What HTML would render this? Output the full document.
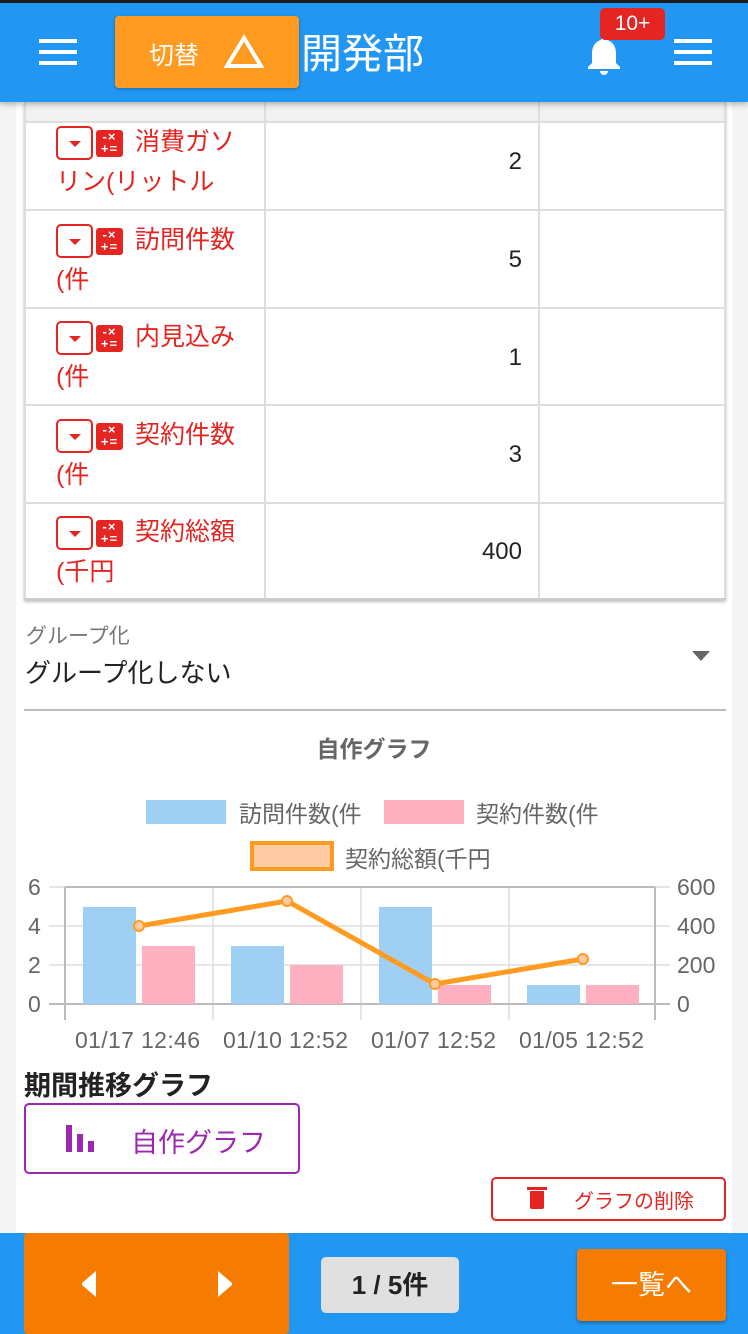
<!DOCTYPE html>
<html><head><meta charset="utf-8"><style>
*{margin:0;padding:0;box-sizing:border-box}
body{width:748px;height:1334px;position:relative;overflow:hidden;background:#f4f4f4;font-family:"Liberation Sans","Noto Sans CJK JP",sans-serif}
.a{position:absolute}
.card{left:16px;top:100px;width:716px;height:1140px;background:#fff}
.hdr{left:0;top:0;width:748px;height:102px;background:#2196f3;border-top:3px solid #1a1a1a;box-shadow:0 2px 6px rgba(0,0,0,.3)}
.hb{background:#fff;height:4px;width:38px}
.rowl{left:24px;width:702px;height:2px;background:#ddd}
.coll{width:2px;background:#ddd;top:102px;height:498px}
.lab{left:56px;color:#e52521;font-size:25px;line-height:40px;width:205px}
.dd{display:inline-block;width:37px;height:34px;border:2px solid #e52521;border-radius:5px;vertical-align:middle;position:relative;margin-right:3px}
.dd:after{content:"";position:absolute;left:11px;top:13px;border:6px solid transparent;border-top:6px solid #e52521}
.calc{display:inline-block;width:27px;height:27px;background:#e52521;border-radius:3px;vertical-align:middle;margin-right:12px;color:#fff;font-size:13px;line-height:12px;text-align:center;font-weight:bold;padding-top:1px;letter-spacing:1px}
.val{right:226px;font-size:24px;color:#222}
</style></head><body>
<div class="a card"></div>
<div class="a" style="left:24px;top:102px;width:702px;height:20px;background:#f2f2f2"></div>
<div class="a" style="left:24px;top:102px;width:702px;height:498px;border-left:2px solid #ddd;border-right:2px solid #ddd;box-shadow:0 2px 3px rgba(0,0,0,.25)"></div>
<div class="a coll" style="left:264px"></div>
<div class="a coll" style="left:538px"></div>
<div class="a rowl" style="top:121px"></div>
<div class="a rowl" style="top:209px"></div>
<div class="a rowl" style="top:307px"></div>
<div class="a rowl" style="top:404px"></div>
<div class="a rowl" style="top:502px"></div>
<div class="a rowl" style="top:598px;background:#ccc"></div>

<div class="a lab" style="top:122px"><span class="dd"></span><span class="calc">-×<br>+=</span>消費ガソ<br>リン(リットル</div>
<div class="a val" style="top:148px">2</div>
<div class="a lab" style="top:220px"><span class="dd"></span><span class="calc">-×<br>+=</span>訪問件数<br>(件</div>
<div class="a val" style="top:246px">5</div>
<div class="a lab" style="top:317px"><span class="dd"></span><span class="calc">-×<br>+=</span>内見込み<br>(件</div>
<div class="a val" style="top:344px">1</div>
<div class="a lab" style="top:415px"><span class="dd"></span><span class="calc">-×<br>+=</span>契約件数<br>(件</div>
<div class="a val" style="top:441px">3</div>
<div class="a lab" style="top:512px"><span class="dd"></span><span class="calc">-×<br>+=</span>契約総額<br>(千円</div>
<div class="a val" style="top:538px">400</div>

<div class="a" style="left:26px;top:620px;font-size:21px;color:#777">グループ化</div>
<div class="a" style="left:25px;top:653px;font-size:26px;color:#222">グループ化しない</div>
<div class="a" style="left:692px;top:651px;border:9px solid transparent;border-top:10px solid #666"></div>
<div class="a" style="left:24px;top:709px;width:702px;height:2px;background:#bbb"></div>
<div class="a" style="left:0;width:748px;top:730px;text-align:center;font-size:23px;font-weight:bold;color:#666">自作グラフ</div>
<div class="a" style="left:146px;top:800px;width:80px;height:24px;background:#a0cff4"></div>
<div class="a" style="left:239px;top:795px;font-size:23px;color:#666">訪問件数(件</div>
<div class="a" style="left:384px;top:800px;width:80px;height:24px;background:#ffb1c1"></div>
<div class="a" style="left:476px;top:795px;font-size:23px;color:#666">契約件数(件</div>
<div class="a" style="left:250px;top:841px;width:84px;height:30px;background:#ffcba4;border:4px solid #ff9b20"></div>
<div class="a" style="left:345px;top:840px;font-size:23px;color:#666">契約総額(千円</div>

<svg class="a" style="left:0;top:870px" width="748" height="190" font-family="Liberation Sans" font-size="23" fill="#666">
<g stroke="#ddd" stroke-width="1.5">
<line x1="49" y1="17" x2="670" y2="17"/><line x1="49" y1="56" x2="670" y2="56"/><line x1="49" y1="95" x2="670" y2="95"/>
<line x1="213" y1="17" x2="213" y2="150"/><line x1="361" y1="17" x2="361" y2="150"/><line x1="509" y1="17" x2="509" y2="150"/>
</g>
<g stroke="#bbb" stroke-width="2"><line x1="49" y1="134" x2="670" y2="134"/><line x1="65" y1="17" x2="65" y2="150"/><line x1="655" y1="17" x2="655" y2="150"/><line x1="65" y1="17" x2="655" y2="17"/></g>
<g fill="#a0cff4"><rect x="83" y="37" width="53" height="97"/><rect x="231" y="76" width="53" height="58"/><rect x="379" y="37" width="53" height="97"/><rect x="527" y="115" width="53" height="19"/></g>
<g fill="#ffb1c1"><rect x="142" y="76" width="53" height="58"/><rect x="290" y="95" width="53" height="39"/><rect x="438" y="115" width="53" height="19"/><rect x="586" y="115" width="53" height="19"/></g>
<polyline points="139,56 287,31 435,114 583,89" fill="none" stroke="#ff9b20" stroke-width="5"/>
<g fill="#ffcba4" stroke="#ff9b20" stroke-width="2"><circle cx="139" cy="56" r="5"/><circle cx="287" cy="31" r="5"/><circle cx="435" cy="114" r="5"/><circle cx="583" cy="89" r="5"/></g>
<text x="28" y="25">6</text><text x="28" y="64">4</text><text x="28" y="103">2</text><text x="28" y="142">0</text>
<text x="677" y="25">600</text><text x="677" y="64">400</text><text x="677" y="103">200</text><text x="677" y="142">0</text>
<text x="75" y="178" textLength="125">01/17 12:46</text><text x="223" y="178" textLength="125">01/10 12:52</text><text x="371" y="178" textLength="125">01/07 12:52</text><text x="519" y="178" textLength="125">01/05 12:52</text>
</svg>

<div class="a" style="left:24px;top:1064px;font-size:27px;font-weight:bold;color:#222">期間推移グラフ</div>
<div class="a" style="left:24px;top:1103px;width:276px;height:71px;border:2px solid #9c27b0;border-radius:5px"></div>
<div class="a" style="left:66px;top:1125px;width:6px;height:27px;background:#9c27b0"></div>
<div class="a" style="left:77px;top:1134px;width:6px;height:18px;background:#9c27b0"></div>
<div class="a" style="left:88px;top:1141px;width:6px;height:11px;background:#9c27b0"></div>
<div class="a" style="left:131px;top:1121px;font-size:27px;color:#9c27b0">自作グラフ</div>
<div class="a" style="left:491px;top:1177px;width:235px;height:44px;border:2px solid #e52521;border-radius:5px"></div>
<div class="a" style="left:530px;top:1191px;width:14px;height:18px;background:#e52521;border-radius:0 0 2px 2px"></div>
<div class="a" style="left:527px;top:1187px;width:20px;height:3px;background:#e52521"></div>
<div class="a" style="left:574px;top:1185px;font-size:20px;color:#e52521">グラフの削除</div>

<div class="a" style="left:0;top:1233px;width:748px;height:101px;background:#2196f3"></div>
<div class="a" style="left:24px;top:1233px;width:265px;height:101px;background:#f57c00;border-radius:4px"></div>
<div class="a" style="left:82px;top:1271px;border:12px solid transparent;border-left:0;border-right:14px solid #fff;height:26px"></div>
<div class="a" style="left:218px;top:1271px;border:12px solid transparent;border-right:0;border-left:14px solid #fff;height:26px"></div>
<div class="a" style="left:321px;top:1257px;width:138px;height:56px;background:#e0e0e0;border-radius:5px;text-align:center;line-height:56px;font-size:26px;font-weight:bold;color:#222">1 / 5件</div>
<div class="a" style="left:577px;top:1249px;width:149px;height:72px;background:#f57c00;border-radius:4px;box-shadow:0 2px 3px rgba(0,0,0,.3);text-align:center;line-height:72px;font-size:27px;color:#fff">一覧へ</div>

<div class="a hdr"></div>
<div class="a hb" style="left:39px;top:39px"></div><div class="a hb" style="left:39px;top:50px"></div><div class="a hb" style="left:39px;top:61px"></div>
<div class="a hb" style="left:674px;top:39px"></div><div class="a hb" style="left:674px;top:50px"></div><div class="a hb" style="left:674px;top:61px"></div>
<div class="a" style="left:115px;top:16px;width:184px;height:72px;background:#ff9b20;border-radius:4px;box-shadow:0 1px 3px rgba(0,0,0,.3)"></div>
<div class="a" style="left:149px;top:36px;font-size:25px;color:#fff">切替</div>
<svg class="a" style="left:223px;top:34px" width="42" height="36"><polygon points="21,4 38,32 4,32" fill="none" stroke="#fff" stroke-width="4"/></svg>
<div class="a" style="left:301px;top:20px;font-size:41px;color:#fff">開発部</div>
<svg class="a" style="left:584px;top:34px" width="40" height="42"><path d="M20 3c-2 0-3 1.5-3 3C10 8 8 14 8 20v9l-4 4v2h32v-2l-4-4v-9c0-6-2-12-9-14 0-1.5-1-3-3-3z M16 37h8a4 4 0 0 1-8 0z" fill="#fff"/></svg>
<div class="a" style="left:600px;top:8px;width:65px;height:32px;background:#e52521;border-radius:5px;text-align:center;line-height:32px;font-size:21px;color:#fff">10+</div>
</body></html>
